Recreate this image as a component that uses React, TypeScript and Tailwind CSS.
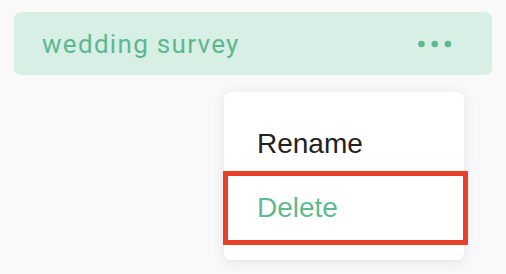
import React from "react";

const MoreDots: React.FC = () => (
  <svg width="40" height="10" viewBox="0 0 40 10" className="block">
    <circle cx="6.5" cy="5" r="3.3" fill="#5cb88f" />
    <circle cx="19.8" cy="5" r="3.3" fill="#5cb88f" />
    <circle cx="33" cy="5" r="3.3" fill="#5cb88f" />
  </svg>
);

export default function App() {
  return (
    <div className="w-[506px] h-[274px] bg-[#f9f9f9] overflow-hidden pt-[12px]">
      {/* survey row */}
      <div className="mx-[14px] h-[63px] rounded-[7px] bg-[#d8efe6] flex items-center justify-between pl-[28px] pr-[37px]">
        <span
          className="text-[26px] leading-[30px] tracking-[1.3px] text-[#5cb88f] pt-[1px]"
          style={{ fontFamily: "Roboto, 'Noto Sans', sans-serif" }}
        >
          wedding survey
        </span>
        <MoreDots />
      </div>

      {/* context menu */}
      <div
        className="relative ml-[224px] mt-[17px] w-[240px] rounded-[7px] bg-white py-[20px] shadow-[0_2px_14px_rgba(0,0,0,0.09)]"
        style={{ fontFamily: "'Liberation Sans', Arial, sans-serif" }}
      >
        <div className="h-[64px] leading-[64px] pl-[33px] text-[28px] text-[#222222]">
          Rename
        </div>
        <div className="h-[64px] leading-[64px] pl-[33px] text-[28px] text-[#5fba90]">
          Delete
        </div>
        {/* highlight annotation */}
        <div className="absolute left-[-1px] top-[79px] w-[245px] h-[74px] border-[5px] border-[#e8402a] pointer-events-none" />
      </div>
    </div>
  );
}
